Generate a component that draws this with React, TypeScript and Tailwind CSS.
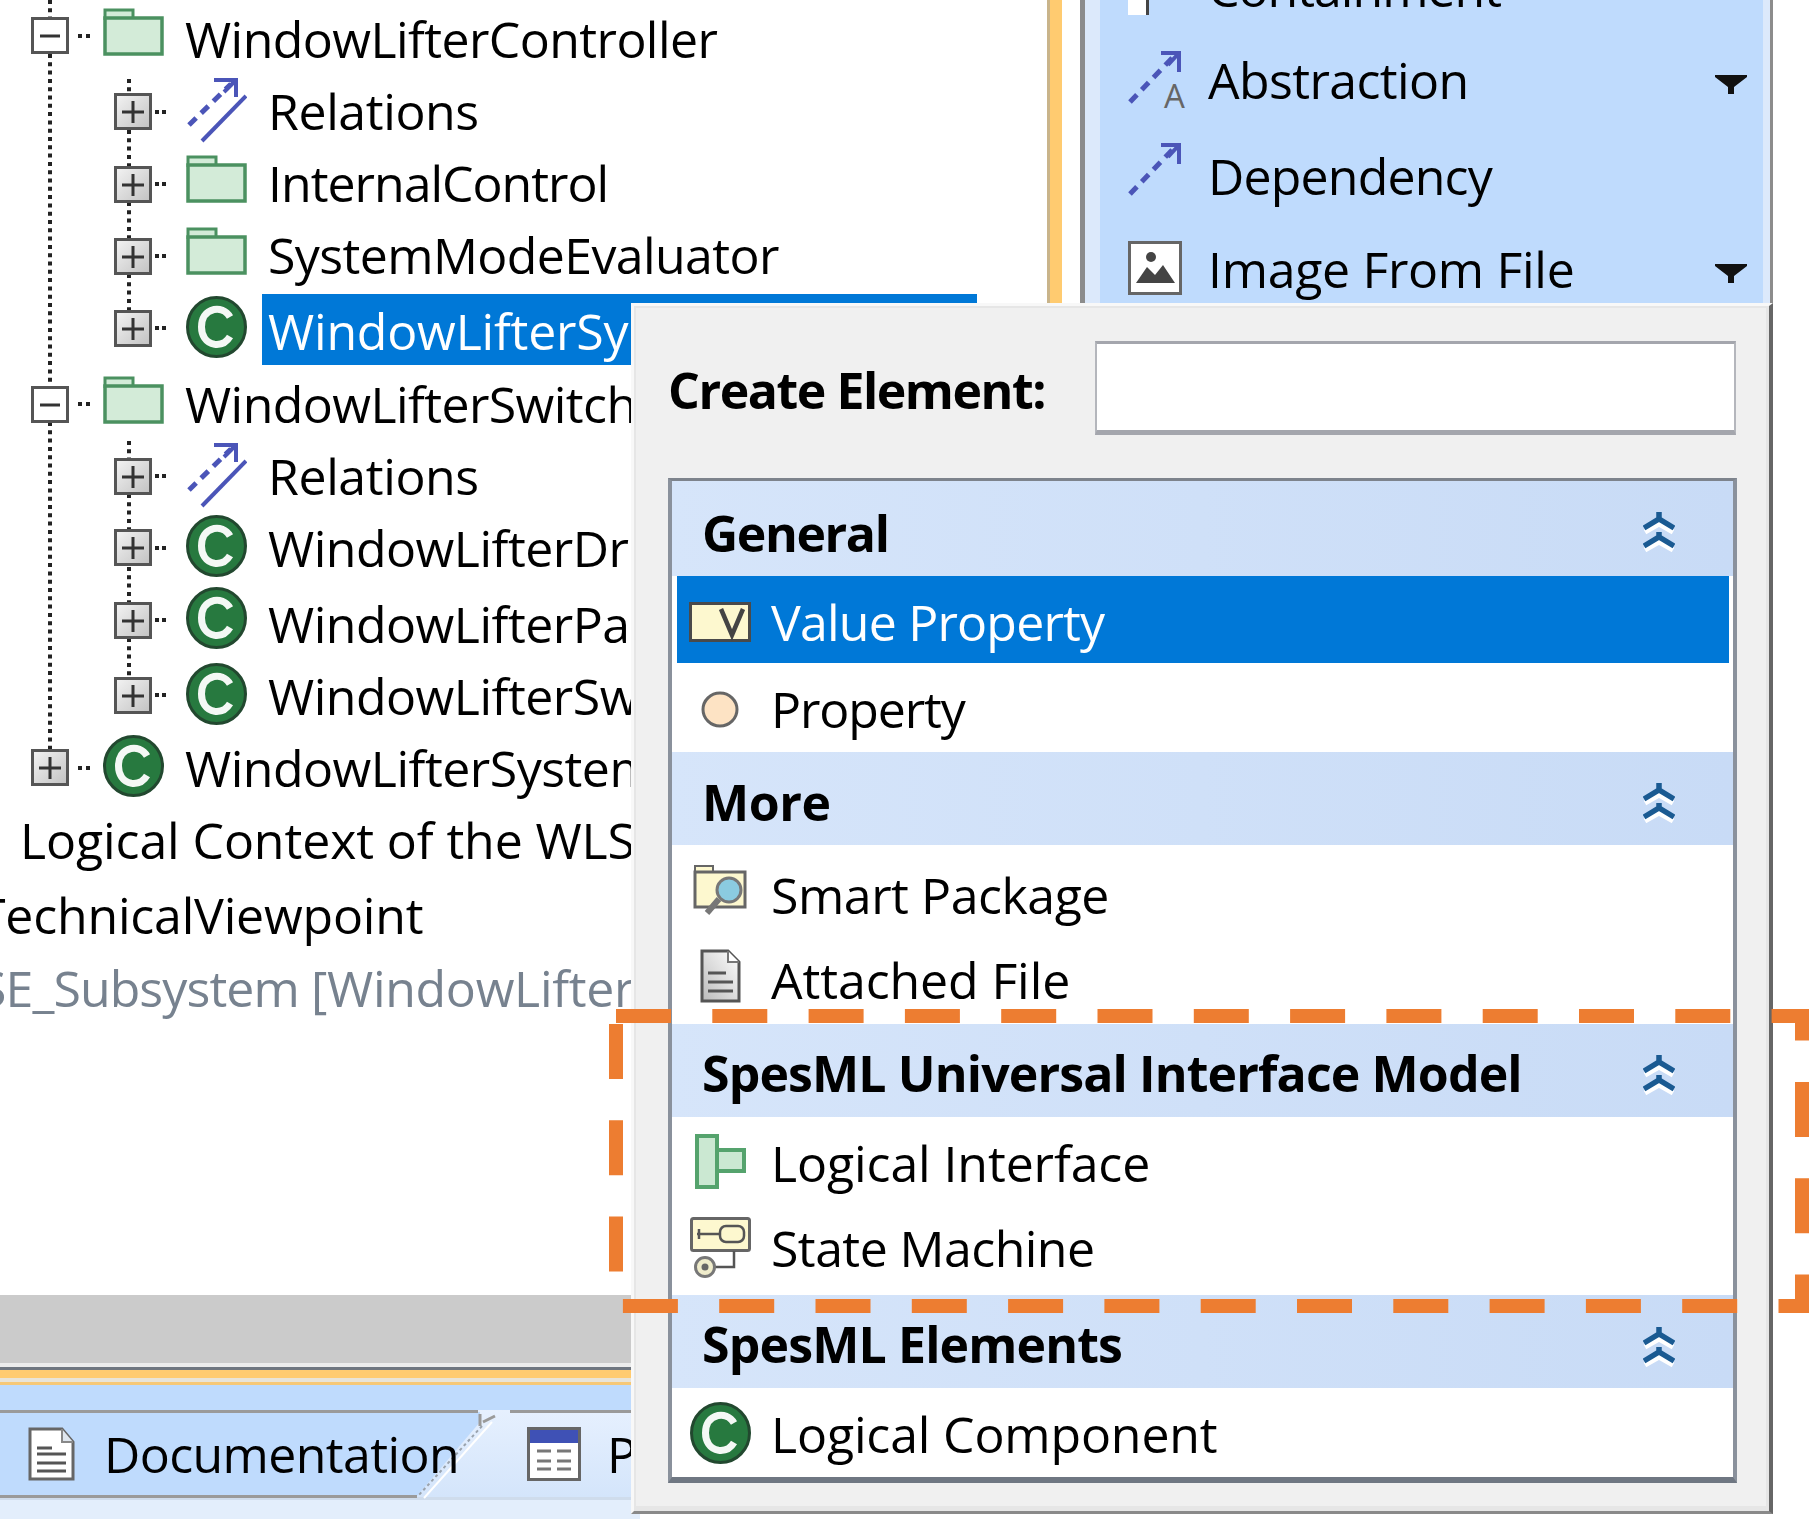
import type { ReactNode } from 'react'

function Folder() {
  return (
    <svg width="61" height="48" viewBox="0 0 61 48" className="block">
      <path d="M2 12V2h28v10" fill="#d3ebd8" stroke="#4b9160" strokeWidth="3" />
      <rect x="2" y="10" width="57" height="36" fill="#d3ebd8" stroke="#4b9160" strokeWidth="3.5" />
    </svg>
  )
}

function ClassIcon() {
  return (
    <svg width="61" height="62" viewBox="0 0 61 62" className="block">
      <ellipse cx="30.5" cy="31" rx="29" ry="29.5" fill="#27793f" stroke="#22482f" strokeWidth="3" />
      <path d="M44 21C40 14 33 12.500 28 13.500 19 15.500 15.500 23 15.500 31s4 16 13 17.300c6 .7 12-1.800 15.500-7.800" fill="none" stroke="#f4f8f5" strokeWidth="7" />
    </svg>
  )
}

function RelationsIcon() {
  return (
    <svg width="61" height="66" viewBox="0 0 61 66" className="block">
      <path d="M3 48 45 7" fill="none" stroke="#4b55b8" strokeWidth="5" strokeDasharray="10 7" />
      <path d="M28 3H50V20M50 3 38 15" fill="none" stroke="#4b55b8" strokeWidth="4" />
      <path d="M16 64 60 19" fill="none" stroke="#4b55b8" strokeWidth="4" />
    </svg>
  )
}

function Expander({ open }: { open?: boolean }) {
  return (
    <div
      className={`flex h-[37px] w-[38px] shrink-0 items-center justify-center border-[3px] border-[#555] ${
        open ? 'bg-white' : 'bg-linear-to-br from-[#f2f2f2] to-[#c4c4c4]'
      }`}
    >
      <svg width="26" height="26" viewBox="0 0 26 26">
        <path d={open ? 'M3 13H23' : 'M2 13H24M13 2V24'} stroke="#333" strokeWidth="3" />
      </svg>
    </div>
  )
}

type TreeRow = {
  label: string
  level: 0 | 1
  rowClass: string
  iconClass: string
  textClass: string
  icon: 'folder' | 'class' | 'relations'
  open?: boolean
  selected?: boolean
}

const TREE_ROWS: TreeRow[] = [
  { label: 'WindowLifterController', level: 0, open: true, icon: 'folder', rowClass: 'h-[76px]', iconClass: 'mt-[7px]', textClass: 'pt-[8px] tracking-[-0.58px]' },
  { label: 'Relations', level: 1, icon: 'relations', rowClass: 'h-[73px]', iconClass: 'mt-0', textClass: 'pt-[4px] tracking-[-0.4px]' },
  { label: 'InternalControl', level: 1, icon: 'folder', rowClass: 'h-[72px]', iconClass: 'mt-[5px]', textClass: 'pt-[3px] tracking-[-1px]' },
  { label: 'SystemModeEvaluator', level: 1, icon: 'folder', rowClass: 'h-[72px]', iconClass: 'mt-[5px]', textClass: 'pt-[3px] tracking-[-0.6px]' },
  { label: 'WindowLifterSystemController', level: 1, icon: 'class', selected: true, rowClass: 'h-[76px]', iconClass: 'mt-[2px]', textClass: 'pt-[8px]' },
  { label: 'WindowLifterSwitches', level: 0, open: true, icon: 'folder', rowClass: 'h-[72px]', iconClass: 'mt-[6px]', textClass: 'pt-[4px] tracking-[-0.58px]' },
  { label: 'Relations', level: 1, icon: 'relations', rowClass: 'h-[71px]', iconClass: 'mt-0', textClass: 'pt-[4px] tracking-[-0.4px]' },
  { label: 'WindowLifterDriverSwitch', level: 1, icon: 'class', rowClass: 'h-[73px]', iconClass: 'mt-[2px]', textClass: 'pt-[5px] tracking-[-0.5px]' },
  { label: 'WindowLifterPassengerSwitch', level: 1, icon: 'class', rowClass: 'h-[75px]', iconClass: 'mt-[1px]', textClass: 'pt-[8px] tracking-[-0.5px]' },
  { label: 'WindowLifterSwitchPanel', level: 1, icon: 'class', rowClass: 'h-[72px]', iconClass: 'mt-[2px]', textClass: 'pt-[5px] tracking-[-0.5px]' },
  { label: 'WindowLifterSystemContext', level: 0, icon: 'class', rowClass: 'h-[77px]', iconClass: 'mt-[2px]', textClass: 'pt-[5px] tracking-[-0.5px]' },
]

function TreeIcon({ kind }: { kind: TreeRow['icon'] }) {
  if (kind === 'folder') return <Folder />
  if (kind === 'class') return <ClassIcon />
  return <RelationsIcon />
}

// dotted connectors behind the expander boxes
function TreeLines() {
  const stubs = [
    [70, 36, 0], [155, 112, 1], [155, 184, 1], [155, 256, 1], [155, 328, 1],
    [70, 404, 0], [155, 476, 1], [155, 548, 1], [155, 620, 1], [155, 695, 1], [70, 768, 0],
  ]
  return (
    <svg width="200" height="800" className="absolute left-0 top-0">
      <g stroke="#222" strokeWidth="4" strokeDasharray="4 4.300" fill="none">
        <path d="M50 0V17M50 54V386M50 422V749" />
        <path d="M129 79V93M129 130V166M129 202V238M129 274V310" />
        <path d="M129 441V458M129 494V529M129 567V602M129 638V677" />
      </g>
      {stubs.map(([x, y, level]) => (
        <path key={y} d={`M${x + (level ? 0 : 8)} ${y}h4M${x + (level ? 7 : 16)} ${y}h4`} stroke="#222" strokeWidth="4" />
      ))}
    </svg>
  )
}

function Tree() {
  return (
    <div className="relative h-[1295px] overflow-hidden bg-white pt-px">
      <TreeLines />
      {TREE_ROWS.map((row) => (
        <div key={row.label + row.rowClass} className={`relative flex ${row.rowClass} ${row.level === 0 ? 'pl-[31px]' : 'pl-[114px]'}`}>
          <div className="mt-[16px] w-[72px] shrink-0">
            <Expander open={row.open} />
          </div>
          <div className={`w-[82px] shrink-0 ${row.iconClass}`}>
            <TreeIcon kind={row.icon} />
          </div>
          {row.selected ? (
            <div className="-ml-[6px] h-[71px] w-[715px] bg-[#0078d7] pl-[6px] pt-[7px] tracking-[-0.2px] text-white">{row.label}</div>
          ) : (
            <div className={`whitespace-nowrap ${row.textClass}`}>{row.label}</div>
          )}
        </div>
      ))}
      <div className="h-[75px] whitespace-nowrap pl-[20px] tracking-[-0.1px]">Logical Context of the WLS</div>
      <div className="-ml-[22px] h-[73px] whitespace-nowrap tracking-[-0.2px]">TechnicalViewpoint</div>
      <div className="-ml-[21px] whitespace-nowrap tracking-[-0.9px] text-[#77828f]">
        SE_Subsystem <span className="tracking-[-0.3px]">[WindowLifterSystem]</span>
      </div>
    </div>
  )
}

function DocIcon() {
  return (
    <svg width="47" height="54" viewBox="0 0 47 54" className="block">
      <path d="M2 2H34L45 15V52H2Z" fill="#fff" stroke="#666" strokeWidth="3" />
      <path d="M34 2V15H45" fill="#dfe6ee" stroke="#888" strokeWidth="2" />
      <path d="M9 21H24M9 27H38M9 36H38M9 44H38" stroke="#555" strokeWidth="3" />
    </svg>
  )
}

function TableIcon() {
  return (
    <svg width="54" height="54" viewBox="0 0 54 54" className="block">
      <rect x="1.500" y="1.500" width="51" height="51" fill="#fff" stroke="#666" strokeWidth="3" />
      <rect x="3" y="3" width="48" height="13" fill="#3f51b5" />
      <path d="M10 24H24M30 24H44M10 34H24M30 34H44M10 42H24M30 42H44" stroke="#777" strokeWidth="3" />
    </svg>
  )
}

function BottomTabs() {
  return (
    <div className="w-[640px]">
      <div className="h-[68px] bg-[#cbcbcb]" />
      <div className="h-[4px] bg-[#ececec]" />
      <div className="h-[3px] bg-[#6f7680]" />
      <div className="h-[8px] bg-[#ffcb70]" />
      <div className="h-[4px] bg-[#e9e4d8]" />
      <div className="h-[3px] bg-[#f6c877]" />
      <div className="h-[25px] bg-[#bfdbfd]" />
      <div className="relative flex h-[87px] bg-linear-to-b from-[#e6f0fe] to-[#d4e5fb]">
        <svg width="640" height="90" className="absolute left-0 top-0">
          <path d="M0 2H480V12L417 86H0Z" fill="#bfdbfd" />
          <path d="M0 1.500H478M510 1.500H640M0 86.500H417" stroke="#9a9a9a" strokeWidth="3" fill="none" />
          <path d="M480 4V16M495 6 483 12" stroke="#9a9a9a" strokeWidth="3" fill="none" />
          <path d="M482 16 418 86" stroke="#9aa3ad" strokeWidth="2" strokeDasharray="3 3" fill="none" />
          <path d="M492 12 424 88" stroke="#fff" strokeWidth="2" fill="none" />
        </svg>
        <div className="relative ml-[28px] mt-[17px] w-[76px] shrink-0">
          <DocIcon />
        </div>
        <div className="relative mt-[14px] w-[352px] shrink-0 overflow-hidden whitespace-nowrap tracking-[-0.6px]">Documentation</div>
        <div className="relative ml-[71px] mt-[17px] w-[80px] shrink-0">
          <TableIcon />
        </div>
        <div className="relative mt-[14px] whitespace-nowrap">Properties</div>
      </div>
      <div className="h-[3px] bg-[#cfdcec]" />
      <div className="h-[19px] bg-[#e3eefc]" />
    </div>
  )
}

function DropArrow() {
  return (
    <svg width="32" height="19" viewBox="0 0 32 19" className="ml-auto block">
      <path d="M0 0H32V2L19 12V19H13V12L0 2Z" fill="#111" />
    </svg>
  )
}

function ToolRow({ label, icon, rowClass, iconClass, textClass, arrow }: { label: string; icon: ReactNode; rowClass: string; iconClass: string; textClass: string; arrow?: boolean }) {
  return (
    <div className={`flex ${rowClass}`}>
      <div className={`w-[80px] shrink-0 ${iconClass}`}>{icon}</div>
      <div className={`whitespace-nowrap pt-[4px] ${textClass}`}>{label}</div>
      {arrow && (
        <div className="ml-auto mt-[29px]">
          <DropArrow />
        </div>
      )}
    </div>
  )
}

function DependencyArrow() {
  return (
    <>
      <path d="M2 52 46 6" fill="none" stroke="#4b55b8" strokeWidth="5" strokeDasharray="10 7" />
      <path d="M33 3H51V22M51 3 40 15" fill="none" stroke="#4b55b8" strokeWidth="4" />
    </>
  )
}

function ImageIcon() {
  return (
    <svg width="54" height="54" viewBox="0 0 54 54" className="block">
      <rect x="1.500" y="1.500" width="51" height="51" fill="#fff" stroke="#666" strokeWidth="3" />
      <circle cx="23" cy="16" r="5" fill="#444" />
      <path d="M8 42 19 26 27 34 35 24 47 42Z" fill="#444" />
    </svg>
  )
}

function ToolPanel() {
  return (
    <div className="flex h-[310px] overflow-hidden">
      <div className="w-[18px] bg-white" />
      <div className="w-[5px] bg-[#8c8c8c]" />
      <div className="w-[15px] bg-[#dce9fb]" />
      <div className="-mt-[46px] h-[400px] w-[663px] bg-[#bfdbfd] pl-[28px] pr-[16px]">
        <ToolRow
          label="Containment"
          rowClass="h-[92px]"
          iconClass="mt-[21px]"
          textClass="tracking-[-1px]"
          icon={<div className="h-[40px] w-[21px] border-r-[3px] border-[#444] bg-white" />}
        />
        <ToolRow
          label="Abstraction"
          rowClass="h-[96px]"
          iconClass="mt-[4px]"
          textClass="tracking-[-0.6px]"
          arrow
          icon={
            <svg width="60" height="60" viewBox="0 0 60 60" className="block">
              <DependencyArrow />
              <text x="36" y="58" fontSize="33" fill="#666" fontFamily="Open Sans">A</text>
            </svg>
          }
        />
        <ToolRow
          label="Dependency"
          rowClass="h-[93px]"
          iconClass="mt-0"
          textClass="tracking-[-0.8px]"
          icon={
            <svg width="60" height="60" viewBox="0 0 60 60" className="block">
              <DependencyArrow />
            </svg>
          }
        />
        <ToolRow label="Image From File" rowClass="h-[93px]" iconClass="mt-[6px]" textClass="tracking-[-0.3px]" arrow icon={<ImageIcon />} />
      </div>
      <div className="w-[7px] bg-[#dce9fb]" />
      <div className="w-[3px] bg-[#8c8c8c]" />
    </div>
  )
}

function Collapse() {
  return (
    <svg width="32" height="40" viewBox="0 0 32 40" className="block">
      <path d="M2 20 16 12 30 20M2 38 16 30 30 38" fill="none" stroke="#fff" strokeWidth="5" />
      <path d="M1 16 16 7 31 16M1 34 16 25 31 34M16 0V8M16 20V26" fill="none" stroke="#1a5a92" strokeWidth="5.500" />
    </svg>
  )
}

function GroupHeader({ label, rowClass, textClass, chevronClass }: { label: string; rowClass: string; textClass: string; chevronClass: string }) {
  return (
    <div className={`flex bg-linear-to-r from-[#d6e5fa] to-[#c8dbf6] pl-[30px] pr-[58px] font-bold ${rowClass}`}>
      <div className={`whitespace-nowrap ${textClass}`}>{label}</div>
      <div className={`ml-auto ${chevronClass}`}>
        <Collapse />
      </div>
    </div>
  )
}

function ListRow({ label, icon, rowClass, iconClass, textClass }: { label: string; icon: ReactNode; rowClass: string; iconClass: string; textClass: string }) {
  return (
    <div className={`flex ${rowClass}`}>
      <div className={`flex w-[96px] shrink-0 items-start justify-center ${iconClass}`}>{icon}</div>
      <div className={`whitespace-nowrap pl-[3px] ${textClass}`}>{label}</div>
    </div>
  )
}

function ValueIcon() {
  return (
    <svg width="62" height="40" viewBox="0 0 62 40" className="block">
      <rect x="1.500" y="1.500" width="59" height="37" fill="#fdf8cf" stroke="#4a4a4a" strokeWidth="3" />
      <path d="M32 7 43 33 54 7" fill="none" stroke="#444" strokeWidth="4.500" />
    </svg>
  )
}

function PropertyIcon() {
  return (
    <svg width="38" height="37" viewBox="0 0 38 37" className="block">
      <ellipse cx="19" cy="18.500" rx="17" ry="16.500" fill="#fde3c4" stroke="#666" strokeWidth="3" />
    </svg>
  )
}

function SmartPackageIcon() {
  return (
    <svg width="54" height="53" viewBox="0 0 54 53" className="block">
      <path d="M2 10V2H20V10" fill="#fdf8cf" stroke="#666" strokeWidth="2" />
      <rect x="2" y="8" width="50" height="35" fill="#fdf8cf" stroke="#666" strokeWidth="3" />
      <path d="M26 35 14 49" stroke="#777" strokeWidth="6" />
      <circle cx="36" cy="26" r="12" fill="#8bcbe0" stroke="#777" strokeWidth="3" />
    </svg>
  )
}

function AttachedFileIcon() {
  return (
    <svg width="41" height="54" viewBox="0 0 41 54">
      <defs>
        <linearGradient id="fileFill" x1="1" x2="0" y1="0" y2="1">
          <stop offset="0" stopColor="#fff" />
          <stop offset="1" stopColor="#bbb" />
        </linearGradient>
      </defs>
      <path d="M2 2H28L39 13V52H2Z" fill="url(#fileFill)" stroke="#555" strokeWidth="3" />
      <path d="M28 2V13H39" fill="#fff" stroke="#777" strokeWidth="2" />
      <path d="M8 24H26M8 33H33M8 42H33" stroke="#555" strokeWidth="3" />
    </svg>
  )
}

function InterfaceIcon() {
  return (
    <svg width="51" height="55" viewBox="0 0 51 55" className="block">
      <rect x="2" y="2" width="20" height="51" fill="#cbe8d2" stroke="#55a36d" strokeWidth="4" />
      <rect x="22" y="16" width="27" height="21" fill="#cbe8d2" stroke="#55a36d" strokeWidth="4" />
    </svg>
  )
}

function StateMachineIcon() {
  return (
    <svg width="61" height="61" viewBox="0 0 61 61" className="block">
      <rect x="1.500" y="1.500" width="58" height="32" rx="2" fill="#fdf8cf" stroke="#666" strokeWidth="3" />
      <path d="M7 17H30M9 12V22" stroke="#555" strokeWidth="2.500" />
      <rect x="30" y="9" width="24" height="16" rx="6" fill="#fdf8cf" stroke="#555" strokeWidth="2.500" />
      <path d="M44 34V50H24" fill="none" stroke="#555" strokeWidth="2.500" />
      <circle cx="15" cy="50" r="9.500" fill="#efeccb" stroke="#777" strokeWidth="3" />
      <circle cx="15" cy="50" r="3.500" fill="#666" />
    </svg>
  )
}

function Popup() {
  return (
    <div className="absolute left-[631px] top-[303px] h-[1211px] w-[1142px] border-b-[3px] border-l-[3px] border-r-[4px] border-t-[3px] border-b-[#8a8a8a] border-l-[#f8f8f8] border-r-[#666] border-t-[#f8f8f8] bg-[#e6e6e6] pl-[2px] pr-[3px] pt-[2px]">
      <div className="h-[1198px] bg-[#f0f0f0] pl-[32px] pt-[33px]">
        <div className="flex h-[137px]">
          <div className="w-[427px] whitespace-nowrap pt-[19px] font-bold tracking-[-1.45px]">Create Element:</div>
          <div className="h-[94px] w-[641px] border-x-[2px] border-b-[5px] border-t-[3px] border-x-[#b4b6bc] border-b-[#a4a6ad] border-t-[#a4a6ad] bg-white" />
        </div>
        <div className="h-[1005px] w-[1069px] border-x-[4px] border-b-[6px] border-t-[3px] border-x-[#8a919c] border-b-[#6f7782] border-t-[#7d838c] bg-white">
          <GroupHeader label="General" rowClass="h-[95px]" textClass="pt-[22px] tracking-[-1.4px]" chevronClass="mt-[31px]" />
          <div className="relative">
            <div className="absolute bottom-0 left-[5px] right-[4px] top-0 bg-[#0078d7]" />
            <div className="relative text-white">
              <ListRow label="Value Property" rowClass="h-[87px]" iconClass="pt-[26px]" textClass="pt-[16px] tracking-[-0.8px]" icon={<ValueIcon />} />
            </div>
          </div>
          <ListRow label="Property" rowClass="h-[89px]" iconClass="pt-[28px]" textClass="pt-[16px] tracking-[-1.1px]" icon={<PropertyIcon />} />
          <GroupHeader label="More" rowClass="h-[93px]" textClass="pt-[20px] tracking-[-0.4px]" chevronClass="mt-[31px]" />
          <ListRow label="Smart Package" rowClass="h-[90px]" iconClass="pt-[19px]" textClass="pt-[20px] tracking-[-0.45px]" icon={<SmartPackageIcon />} />
          <ListRow label="Attached File" rowClass="h-[89px]" iconClass="pt-[14px]" textClass="pt-[15px] tracking-[-0.1px]" icon={<AttachedFileIcon />} />
          <GroupHeader label="SpesML Universal Interface Model" rowClass="h-[93px]" textClass="pt-[19px] tracking-[-0.87px]" chevronClass="mt-[31px]" />
          <ListRow label="Logical Interface" rowClass="h-[90px]" iconClass="pt-[17px]" textClass="pt-[16px] tracking-[-0.1px]" icon={<InterfaceIcon />} />
          <ListRow label="State Machine" rowClass="h-[88px]" iconClass="pt-[10px]" textClass="pt-[11px] tracking-[-0.55px]" icon={<StateMachineIcon />} />
          <GroupHeader label="SpesML Elements" rowClass="h-[93px]" textClass="pt-[19px] tracking-[-0.85px]" chevronClass="mt-[32px]" />
          <ListRow label="Logical Component" rowClass="h-[89px]" iconClass="pt-[14px]" textClass="pt-[16px] tracking-[-0.15px]" icon={<ClassIcon />} />
        </div>
      </div>
    </div>
  )
}

export default function App() {
  return (
    <div className="relative h-[1519px] w-[1809px] overflow-hidden bg-white font-['Open_Sans',sans-serif] text-[50px] leading-[60px] text-black">
      <div className="flex h-full items-start">
        <div className="w-[1047px] shrink-0">
          <Tree />
          <BottomTabs />
        </div>
        <div className="h-[310px] w-[15px] shrink-0 border-l-[3px] border-[#c9b48a] bg-[#ffcb70]" />
        <ToolPanel />
      </div>

      <Popup />

      {/* orange callout around the SpesML group */}
      <svg width="1809" height="1519" className="pointer-events-none absolute left-0 top-0">
        <rect x="616" y="1016" width="1186" height="290" fill="none" stroke="#ed7d31" strokeWidth="14" strokeDasharray="55 41.300" />
      </svg>
    </div>
  )
}
